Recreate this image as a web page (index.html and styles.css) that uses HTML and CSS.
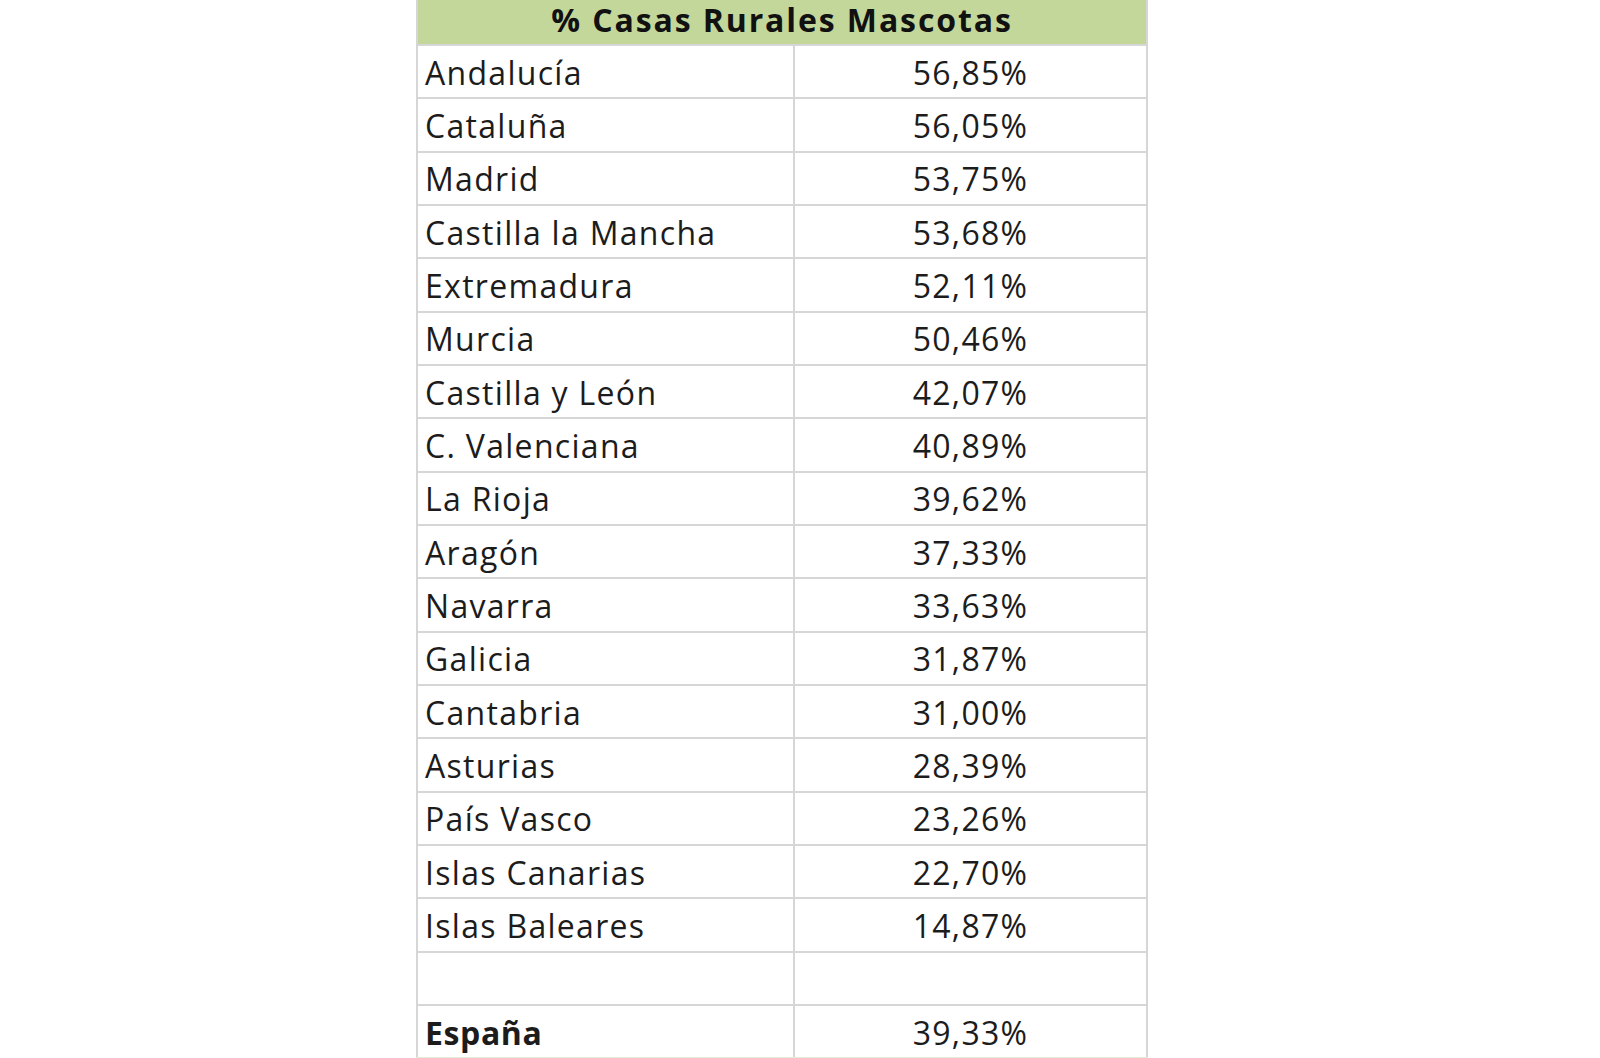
FILE: index.html
```html
<!DOCTYPE html>
<html lang="es">
<head>
<meta charset="utf-8">
<title>% Casas Rurales Mascotas</title>
<link rel="stylesheet" href="styles.css">
</head>
<body>
<div class="page">
  <table class="sheet">
    <colgroup>
      <col class="col-name">
      <col class="col-val">
    </colgroup>
    <thead>
      <tr><th colspan="2" class="head">% Casas Rurales Mascotas</th></tr>
    </thead>
    <tbody>
      <tr><td class="name">Andalucía</td><td class="val">56,85%</td></tr>
      <tr><td class="name">Cataluña</td><td class="val">56,05%</td></tr>
      <tr><td class="name">Madrid</td><td class="val">53,75%</td></tr>
      <tr><td class="name">Castilla la Mancha</td><td class="val">53,68%</td></tr>
      <tr><td class="name">Extremadura</td><td class="val">52,11%</td></tr>
      <tr><td class="name">Murcia</td><td class="val">50,46%</td></tr>
      <tr><td class="name">Castilla y León</td><td class="val">42,07%</td></tr>
      <tr><td class="name">C. Valenciana</td><td class="val">40,89%</td></tr>
      <tr><td class="name">La Rioja</td><td class="val">39,62%</td></tr>
      <tr><td class="name">Aragón</td><td class="val">37,33%</td></tr>
      <tr><td class="name">Navarra</td><td class="val">33,63%</td></tr>
      <tr><td class="name">Galicia</td><td class="val">31,87%</td></tr>
      <tr><td class="name">Cantabria</td><td class="val">31,00%</td></tr>
      <tr><td class="name">Asturias</td><td class="val">28,39%</td></tr>
      <tr><td class="name">País Vasco</td><td class="val">23,26%</td></tr>
      <tr><td class="name">Islas Canarias</td><td class="val">22,70%</td></tr>
      <tr><td class="name">Islas Baleares</td><td class="val">14,87%</td></tr>
      <tr><td class="name"></td><td class="val"></td></tr>
      <tr class="total"><td class="name">España</td><td class="val">39,33%</td></tr>
    </tbody>
  </table>
</div>
</body>
</html>
```

FILE: styles.css
```css
html, body {
  margin: 0;
  padding: 0;
  background: #ffffff;
}

.page {
  padding-left: 416px;
}

.sheet {
  border-collapse: collapse;
  table-layout: fixed;
  width: 730px;
  font-family: "Open Sans", "Noto Sans", sans-serif;
  color: #1c1c1c;
  font-size: 32px;
  letter-spacing: 1.3px;
}

.col-name {
  width: 377px;
}

.col-val {
  width: 353px;
}

.head {
  height: 40px;
  padding: 0 0 4px 0;
  background: #c4d79b;
  font-weight: 700;
  font-size: 32px;
  letter-spacing: 1.9px;
  color: #111;
  text-align: center;
  vertical-align: middle;
  line-height: 36px;
  border-left: 2px solid #d6d6d6;
  border-right: 2px solid #d6d6d6;
}

.sheet td {
  height: 49.33px;
  padding: 2px 0 0 0;
  border: 2px solid #d6d6d6;
  line-height: 1;
  vertical-align: middle;
}

.name {
  padding-left: 7px !important;
  text-align: left;
}

.val {
  text-align: center;
}

.total .name {
  font-weight: 700;
  letter-spacing: 0.6px;
}

.total td {
  border-bottom: 2px solid #e4ecd4;
}
```
